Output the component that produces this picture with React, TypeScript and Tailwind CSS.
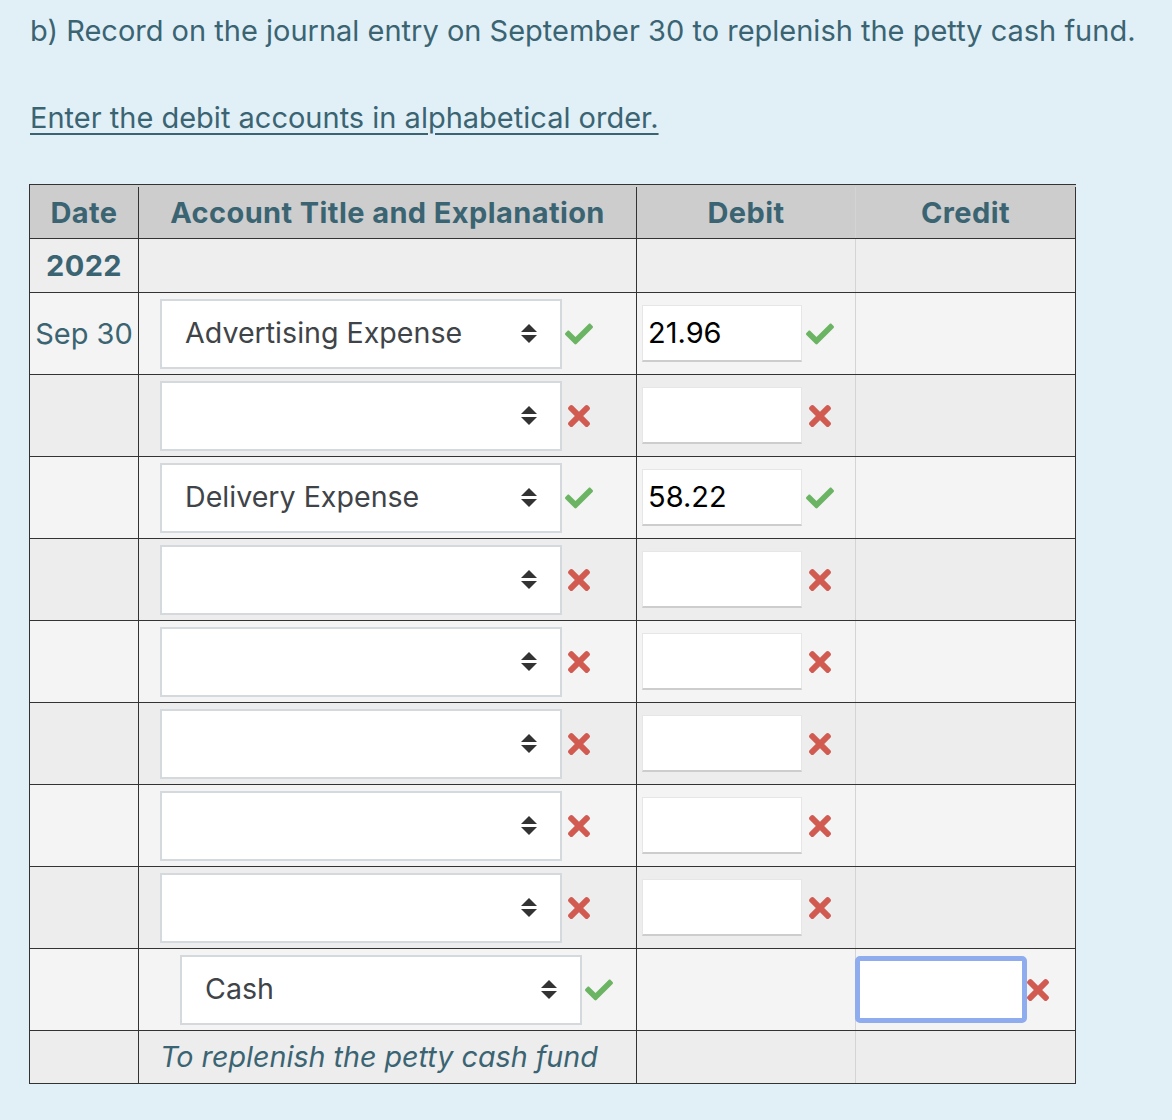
import React from "react";

const font = { fontFamily: "Inter, 'Noto Sans', sans-serif" };

function Check() {
  return (
    <svg width="28" height="22" viewBox="0 60 512 392" className="shrink-0">
      <path
        fill="#6bb463"
        d="M173.898 439.404l-166.4-166.4c-9.997-9.997-9.997-26.206 0-36.204l36.203-36.204c9.997-9.998 26.207-9.998 36.204 0L192 312.69 432.095 72.596c9.997-9.997 26.207-9.997 36.204 0l36.203 36.204c9.997 9.997 9.997 26.206 0 36.204l-294.4 294.401c-9.998 9.997-26.207 9.997-36.204-.001z"
      />
    </svg>
  );
}

function Cross() {
  return (
    <svg width="22" height="22" viewBox="0 80 352 352" className="shrink-0">
      <path
        fill="#d15a51"
        d="M242.72 256l100.07-100.07c12.28-12.28 12.28-32.19 0-44.48l-22.24-22.24c-12.28-12.28-32.19-12.28-44.48 0L176 189.28 75.93 89.21c-12.28-12.28-32.19-12.28-44.48 0L9.21 111.45c-12.28 12.28-12.28 32.19 0 44.48L109.28 256 9.21 356.07c-12.28 12.28-12.28 32.19 0 44.48l22.24 22.24c12.28 12.28 32.2 12.28 44.48 0L176 322.72l100.07 100.07c12.28 12.28 32.2 12.28 44.48 0l22.24-22.24c12.28-12.28 12.28-32.19 0-44.48L242.72 256z"
      />
    </svg>
  );
}

function SortIcon() {
  return (
    <svg width="16" height="20" viewBox="0 0 16 20" className="shrink-0">
      <path d="M0 8 L8 0 L16 8 Z" fill="#333" />
      <path d="M0 11 L16 11 L8 19 Z" fill="#333" />
    </svg>
  );
}

function Select({ value }: { value: string }) {
  return (
    <div className="flex h-[70px] w-[402px] items-center border-2 border-[#d3d9dd] bg-white pl-[23px] pr-[23px]">
      <span className="flex-1 text-[28.6px] text-[#3f4448]">{value}</span>
      <SortIcon />
    </div>
  );
}

function DebitInput({ value }: { value: string }) {
  return (
    <div className="flex h-[57px] w-[160px] items-center border border-[#e6e6e6] border-b-2 border-b-[#cdcdcd] bg-white pl-[5px] text-[29px] text-black">
      {value}
    </div>
  );
}

type Row = { date?: string; account: string; debit: string; ok: boolean };

const rows: Row[] = [
  { date: "Sep 30", account: "Advertising Expense", debit: "21.96", ok: true },
  { account: "", debit: "", ok: false },
  { account: "Delivery Expense", debit: "58.22", ok: true },
  { account: "", debit: "", ok: false },
  { account: "", debit: "", ok: false },
  { account: "", debit: "", ok: false },
  { account: "", debit: "", ok: false },
  { account: "", debit: "", ok: false },
];

export default function App() {
  return (
    <div className="min-h-[1120px] w-[1172px] bg-[#e1f0f7] text-[#3b6473]" style={font}>
      <div className="pl-[30px] pt-[11px] text-[29px] leading-[40px]">
        b) Record on the journal entry on September 30 to replenish the petty cash fund.
      </div>
      <div className="mt-[47px] pl-[30px] text-[29px] leading-[40px]">
        <span className="underline decoration-2 underline-offset-[5px]">
          Enter the debit accounts in alphabetical order.
        </span>
      </div>

      <div className="ml-[29px] mt-[46px] w-[1047px] border-l border-t border-[#333]">
        {/* header */}
        <div className="flex h-[54px] border-b border-[#333] bg-[#cdcdcd] pt-[2px] text-[29px] font-bold tracking-[0.4px]">
          <div className="flex w-[109px] items-center justify-center border-r border-[#333]">Date</div>
          <div className="flex w-[498px] items-center justify-center border-r border-[#333]">
            Account Title and Explanation
          </div>
          <div className="flex w-[219px] items-center justify-center border-r border-[#d4d4d4]">Debit</div>
          <div className="flex w-[220px] items-center justify-center border-r border-[#333]">Credit</div>
        </div>
        {/* year */}
        <div className="flex h-[54px] border-b border-[#333] bg-[#eeeeee] text-[29px] font-bold tracking-[0.4px]">
          <div className="flex w-[109px] items-center justify-center border-r border-[#333]">2022</div>
          <div className="w-[498px] border-r border-[#333]" />
          <div className="w-[219px] border-r border-[#d4d4d4]" />
          <div className="w-[220px] border-r border-[#333]" />
        </div>
        {rows.map((r, i) => (
          <div
            key={i}
            className={`flex h-[82px] border-b border-[#333] ${i % 2 === 0 ? "bg-[#f4f4f4]" : "bg-[#ededed]"}`}
          >
            <div className="flex w-[109px] items-center justify-center border-r border-[#333] text-[29px]">
              {r.date ?? ""}
            </div>
            <div className="flex w-[498px] items-center gap-[3px] border-r border-[#333] pl-[21px]">
              <Select value={r.account} />
              {r.ok ? <Check /> : <div className="pl-[3px]"><Cross /></div>}
            </div>
            <div className="flex w-[219px] items-center gap-[4px] border-r border-[#d4d4d4] pl-[5px]">
              <DebitInput value={r.debit} />
              {r.ok ? <Check /> : <div className="pl-[3px]"><Cross /></div>}
            </div>
            <div className="w-[220px] border-r border-[#333]" />
          </div>
        ))}
        {/* cash row */}
        <div className="flex h-[82px] border-b border-[#333] bg-[#f4f4f4]">
          <div className="w-[109px] border-r border-[#333]" />
          <div className="flex w-[498px] items-center gap-[3px] border-r border-[#333] pl-[41px]">
            <Select value="Cash" />
            <Check />
          </div>
          <div className="w-[219px] border-r border-[#d4d4d4]" />
          <div className="flex w-[220px] items-center border-r border-[#333]">
            <div className="-ml-[1px] h-[67px] w-[172px] rounded-[5px] border-[5px] border-[#8eacee] bg-white" />
            <Cross />
          </div>
        </div>
        {/* explanation */}
        <div className="flex h-[53px] border-b border-[#333] bg-[#ededed]">
          <div className="w-[109px] border-r border-[#333]" />
          <div className="flex w-[498px] items-center border-r border-[#333] pl-[21px] text-[28.7px] italic">
            To replenish the petty cash fund
          </div>
          <div className="w-[219px] border-r border-[#d4d4d4]" />
          <div className="w-[220px] border-r border-[#333]" />
        </div>
      </div>
    </div>
  );
}
